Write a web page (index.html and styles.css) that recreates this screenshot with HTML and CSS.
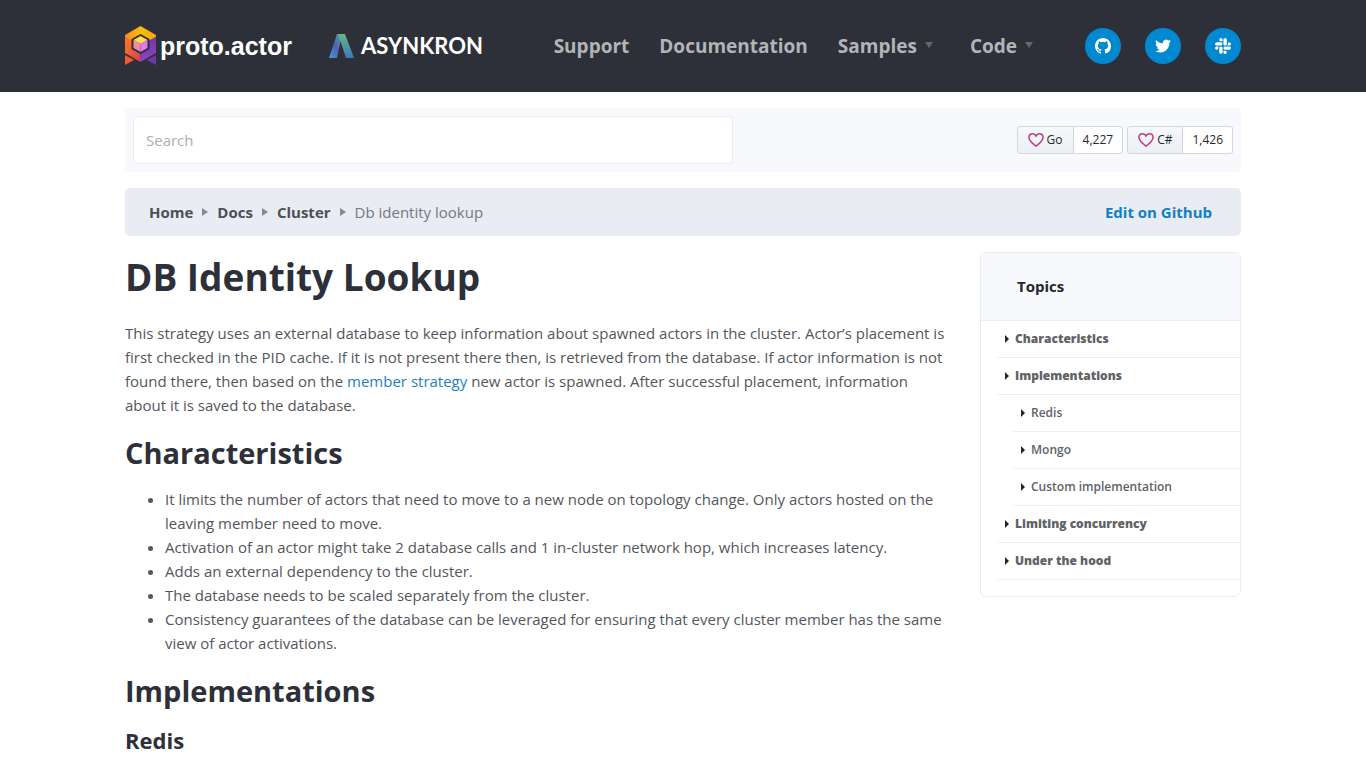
FILE: index.html
```html
<!DOCTYPE html>
<html lang="en">
<head>
<meta charset="utf-8">
<meta name="viewport" content="width=device-width, initial-scale=1">
<title>DB Identity Lookup</title>
<link rel="stylesheet" href="styles.css">
</head>
<body>
<header class="site-header">
  <div class="container header-row">
    <a class="brand" href="#">
      <svg class="brand-mark" viewBox="0 0 31 40" aria-hidden="true">
        <defs>
          <linearGradient id="top" x1="0" x2="1"><stop offset="0" stop-color="#f58a1f"/><stop offset=".5" stop-color="#fdb913"/><stop offset="1" stop-color="#f5a800"/></linearGradient>
          <linearGradient id="left" x1="0" x2="1" y1="0" y2="1"><stop offset="0" stop-color="#fa7a26"/><stop offset="1" stop-color="#d93f55"/></linearGradient>
          <linearGradient id="right" x1="0" x2="0" y1="0" y2="1"><stop offset="0" stop-color="#7037a8"/><stop offset="1" stop-color="#8e45bd"/></linearGradient>
          <linearGradient id="cube" x1="0" x2="1" y1="0" y2="1"><stop offset="0" stop-color="#ff9a5c"/><stop offset="1" stop-color="#e17af0"/></linearGradient>
        </defs>
        <path fill="url(#top)" d="M15.500 0 31 9v2l-7 4-8.500-5L7 15l-7-4V9z"/>
        <path fill="url(#left)" d="m0 11 8 4v8l7.500 5v8L0 27z"/>
        <path fill="url(#right)" d="m31 11-8 4v8l-7.500 5v8L31 27z"/>
        <path fill="#2d3038" d="m15.500 8 9 5v10l-9 5-9-5V13z"/>
        <path fill="#ffe14f" d="m15.500 10 7 4-7 4-7-4z"/>
        <path fill="url(#cube)" d="m8.500 14 7 4v8l-7-4z"/>
        <path fill="#df7af0" d="m22.500 14-7 4v8l7-4z"/>
        <path fill="#f15a29" d="m0 29 9 5-9 5z"/>
        <path fill="#7139a8" d="m31 29-9 5 9 5z"/>
      </svg>
      <span class="brand-name">proto.actor</span>
    </a>
    <a class="sponsor" href="#">
      <svg class="sponsor-mark" viewBox="0 0 25 25" aria-hidden="true">
        <defs>
          <linearGradient id="legl" x1="1" x2="0" y1="0" y2="1"><stop offset="0" stop-color="#4faaa0"/><stop offset=".5" stop-color="#5361b0"/><stop offset="1" stop-color="#429ddd"/></linearGradient>
          <linearGradient id="legr" x1="0" x2="0" y1="0" y2="1"><stop offset="0" stop-color="#62b77c"/><stop offset="1" stop-color="#3e78bd"/></linearGradient>
        </defs>
        <path fill="url(#legl)" d="M8 0h5L8 24H0z"/>
        <path fill="url(#legr)" d="M9 0h7l9 24h-8z"/>
      </svg>
      <span class="sponsor-name">ASYNKRON</span>
    </a>
    <nav class="main-nav" aria-label="Main">
      <a href="#">Support</a>
      <a href="#">Documentation</a>
      <a href="#" class="has-menu">Samples</a>
      <a href="#" class="has-menu">Code</a>
    </nav>
    <div class="social">
      <a href="#" aria-label="GitHub"><svg viewBox="0 0 16 16"><path d="M8 0C3.580 0 0 3.580 0 8c0 3.540 2.290 6.530 5.470 7.590.4.070.55-.17.55-.38 0-.19-.01-.82-.01-1.490-2.010.37-2.530-.49-2.690-.94-.09-.23-.48-.94-.82-1.130-.28-.15-.68-.52-.01-.53.63-.01 1.080.58 1.230.82.72 1.210 1.870.87 2.330.66.070-.52.280-.87.510-1.070-1.780-.2-3.640-.89-3.640-3.950 0-.87.310-1.590.820-2.150-.08-.2-.36-1.020.080-2.120 0 0 .67-.21 2.200.82a7.600 7.600 0 0 1 4 0c1.530-1.040 2.200-.82 2.200-.82.44 1.100.16 1.920.08 2.120.51.560.82 1.270.82 2.150 0 3.070-1.870 3.750-3.650 3.950.29.250.54.730.54 1.480 0 1.070-.01 1.930-.01 2.200 0 .21.15.46.55.380A8.010 8.010 0 0 0 16 8c0-4.420-3.580-8-8-8z"/></svg></a>
      <a href="#" aria-label="Twitter"><svg viewBox="0 0 24 24"><path d="M23.950 4.570a10 10 0 0 1-2.820.77 4.960 4.960 0 0 0 2.160-2.720 9.900 9.900 0 0 1-3.120 1.190 4.920 4.920 0 0 0-8.380 4.480C7.690 8.100 4.070 6.130 1.640 3.160a4.820 4.820 0 0 0-.67 2.480c0 1.710.87 3.210 2.190 4.100a4.900 4.900 0 0 1-2.230-.62v.06a4.920 4.920 0 0 0 3.950 4.830 5 5 0 0 1-2.210.08 4.940 4.940 0 0 0 4.600 3.420A9.870 9.870 0 0 1 0 19.540a13.990 13.990 0 0 0 7.550 2.210c9.050 0 14-7.500 14-13.980 0-.21 0-.42-.02-.63a9.900 9.900 0 0 0 2.420-2.570z"/></svg></a>
      <a href="#" aria-label="Slack"><svg viewBox="0 0 24 24"><path d="M5.042 15.165a2.528 2.528 0 0 1-2.520 2.523A2.528 2.528 0 0 1 0 15.165a2.527 2.527 0 0 1 2.522-2.520h2.520v2.520zm1.271 0a2.527 2.527 0 0 1 2.521-2.520 2.527 2.527 0 0 1 2.521 2.520v6.313A2.528 2.528 0 0 1 8.834 24a2.528 2.528 0 0 1-2.521-2.522v-6.313zM8.834 5.042a2.528 2.528 0 0 1-2.521-2.520A2.528 2.528 0 0 1 8.834 0a2.528 2.528 0 0 1 2.521 2.522v2.520H8.834zm0 1.271a2.528 2.528 0 0 1 2.521 2.521 2.528 2.528 0 0 1-2.521 2.521H2.522A2.528 2.528 0 0 1 0 8.834a2.528 2.528 0 0 1 2.522-2.521h6.312zm10.122 2.521a2.528 2.528 0 0 1 2.522-2.521A2.528 2.528 0 0 1 24 8.834a2.528 2.528 0 0 1-2.522 2.521h-2.522V8.834zm-1.268 0a2.528 2.528 0 0 1-2.523 2.521 2.527 2.527 0 0 1-2.520-2.521V2.522A2.527 2.527 0 0 1 15.165 0a2.528 2.528 0 0 1 2.523 2.522v6.312zm-2.523 10.122a2.528 2.528 0 0 1 2.523 2.522A2.528 2.528 0 0 1 15.165 24a2.527 2.527 0 0 1-2.520-2.522v-2.522h2.520zm0-1.268a2.527 2.527 0 0 1-2.520-2.523 2.526 2.526 0 0 1 2.520-2.520h6.313A2.527 2.527 0 0 1 24 15.165a2.528 2.528 0 0 1-2.522 2.523h-6.313z"/></svg></a>
    </div>
  </div>
</header>

<div class="container page">
  <div class="toolbar">
    <input class="search" type="search" placeholder="Search" aria-label="Search">
    <div class="stars">
      <div class="star">
        <a class="star-button" href="#"><svg viewBox="0 0 16 16" aria-hidden="true"><path d="M8 14.200C3 10.500.9 8.200.9 5.300A3.800 3.800 0 0 1 4.700 1.700C6.200 1.700 7.400 2.600 8 3.900c.6-1.300 1.800-2.200 3.300-2.200a3.800 3.800 0 0 1 3.800 3.600c0 2.900-2.100 5.200-7.100 8.900z"/></svg>Go</a><a class="star-count" href="#">4,227</a>
      </div>
      <div class="star">
        <a class="star-button" href="#"><svg viewBox="0 0 16 16" aria-hidden="true"><path d="M8 14.200C3 10.500.9 8.200.9 5.300A3.800 3.800 0 0 1 4.700 1.700C6.200 1.700 7.400 2.600 8 3.900c.6-1.300 1.800-2.200 3.300-2.200a3.800 3.800 0 0 1 3.800 3.600c0 2.900-2.100 5.200-7.100 8.900z"/></svg>C#</a><a class="star-count" href="#">1,426</a>
      </div>
    </div>
  </div>

  <div class="crumb-bar">
    <nav aria-label="Breadcrumb">
      <ol class="crumbs">
        <li><a href="#">Home</a></li>
        <li><a href="#">Docs</a></li>
        <li><a href="#">Cluster</a></li>
        <li aria-current="page">Db identity lookup</li>
      </ol>
    </nav>
    <a class="edit-link" href="#">Edit on Github</a>
  </div>

  <div class="columns">
    <main class="article">
      <h1>DB Identity Lookup</h1>
      <p>This strategy uses an external database to keep information about spawned actors in the cluster. Actor’s placement is first checked in the PID cache. If it is not present there then, is retrieved from the database. If actor information is not found there, then based on the <a href="#">member strategy</a> new actor is spawned. After successful placement, information about it is saved to the database.</p>
      <h2>Characteristics</h2>
      <ul>
        <li>It limits the number of actors that need to move to a new node on topology change. Only actors hosted on the leaving member need to move.</li>
        <li>Activation of an actor might take 2 database calls and 1 in-cluster network hop, which increases latency.</li>
        <li>Adds an external dependency to the cluster.</li>
        <li>The database needs to be scaled separately from the cluster.</li>
        <li>Consistency guarantees of the database can be leveraged for ensuring that every cluster member has the same view of actor activations.</li>
      </ul>
      <h2>Implementations</h2>
      <h3>Redis</h3>
    </main>
    <aside class="topics">
      <h4>Topics</h4>
      <ul>
        <li><a href="#">Characteristics</a></li>
        <li><a href="#">Implementations</a>
          <ul>
            <li><a href="#">Redis</a></li>
            <li><a href="#">Mongo</a></li>
            <li><a href="#">Custom implementation</a></li>
          </ul>
        </li>
        <li><a href="#">Limiting concurrency</a></li>
        <li><a href="#">Under the hood</a></li>
      </ul>
    </aside>
  </div>
</div>
</body>
</html>
```
FILE: styles.css
```css
* { box-sizing: border-box; }

body {
  margin: 0;
  background: #fff;
  color: #54565b;
  font: 15px/24px "Open Sans", "Noto Sans", sans-serif;
}

a { color: inherit; text-decoration: none; }

.container {
  max-width: 1148px;
  margin: 0 auto;
  padding: 0 16px;
}

/* Header */
.site-header { background: #2d3038; color: #fff; }

.header-row {
  display: flex;
  align-items: center;
  min-height: 92px;
}

.brand, .sponsor { display: flex; align-items: center; }
.brand { gap: 4px; margin-right: 37px; }
.brand-mark { width: 31px; height: 40px; }
.brand-name { font: bold 25px/36px "Liberation Sans", Arial, sans-serif; }
.sponsor { gap: 7px; }
.sponsor-mark { width: 25px; height: 25px; }
.sponsor-name { font: bold 22px/32px Lato, sans-serif; }

.main-nav {
  display: flex;
  gap: 30px;
  margin-left: auto;
  color: #b3b4b9;
  font-size: 19px;
  font-weight: 700;
}

.has-menu { display: flex; align-items: center; }
.has-menu::after {
  content: "";
  margin: 0 7px 2px 8px;
  border: 4px solid transparent;
  border-top: 6px solid #65686e;
  border-bottom: 0;
}

.social { display: flex; gap: 24px; margin-left: 45px; }
.social a {
  display: grid;
  place-items: center;
  width: 36px;
  height: 36px;
  border-radius: 50%;
  background: #0088d1;
}
.social svg { width: 16px; height: 16px; fill: #fff; }

/* Search and repository counters */
.page { padding-top: 16px; }

.toolbar {
  display: flex;
  justify-content: space-between;
  align-items: center;
  padding: 8px;
  background: #f8f9fd;
}

.search {
  flex: 0 1 600px;
  min-width: 0;
  height: 48px;
  padding: 0 12px;
  border: 1px solid #e9ecf1;
  border-radius: 4px;
  background: #fff;
  color: inherit;
  font: inherit;
}
.search::placeholder { color: #acaeb1; opacity: 1; }

.stars { display: flex; gap: 4px; }
.star { display: flex; color: #24292e; font-size: 12px; line-height: 26px; }
.star-button, .star-count { border: 1px solid #d3d6da; }
.star-button {
  display: flex;
  align-items: center;
  gap: 3px;
  padding: 0 10px;
  border-radius: 3px 0 0 3px;
  background: linear-gradient(#f6f8fa, #ebf0f4);
}
.star-button svg { width: 16px; height: 16px; fill: none; stroke: #bf3989; stroke-width: 1.5; }
.star-count {
  padding: 0 9px;
  border-left: 0;
  border-radius: 0 3px 3px 0;
  background: #fff;
}

/* Breadcrumb */
.crumb-bar {
  display: flex;
  justify-content: space-between;
  margin: 16px 0;
  padding: 12px 29px 12px 24px;
  border-radius: 5px;
  background: #e9ecf2;
}
.crumbs {
  display: flex;
  margin: 0;
  padding: 0;
  list-style: none;
  color: #767980;
}
.crumbs li { display: flex; align-items: center; }
.crumbs a { color: #4d4f55; font-weight: 700; }
.crumbs li + li::before {
  content: "";
  margin: 0 9px;
  border: 4px solid transparent;
  border-left: 6px solid #86898f;
  border-right: 0;
}
.edit-link { color: #0e80c8; font-weight: 700; }

/* Article and topics */
.columns { display: flex; align-items: flex-start; gap: 28px; }

.article { flex: 1; min-width: 0; }
.article h1, .article h2, .article h3 { color: #2d3038; font-weight: 700; }
.article h1 { margin: 0 0 20px; font-size: 37px; line-height: 49px; }
.article p { margin: 0 0 16px; }
.article p a { color: #1c7fc0; }
.article h2 { margin: 0 0 14px; font-size: 29px; line-height: 40px; }
.article h3 { margin: 0 0 16px; font-size: 22px; line-height: 30px; }
.article ul { margin: 0 0 16px; padding-left: 40px; }

.topics {
  flex: 0 0 261px;
  padding-bottom: 16px;
  border: 1px solid #e9ecf0;
  border-radius: 6px;
  font-size: 12px;
  line-height: 36px;
}
.topics h4 {
  margin: 0;
  padding: 0 36px;
  border-bottom: 1px solid #e9ecf0;
  border-radius: 5px 5px 0 0;
  background: #f8f9fd;
  color: #25272e;
  font-size: 15px;
  line-height: 67px;
}
.topics ul { margin: 0; padding: 0 0 0 16px; list-style: none; }
.topics a {
  display: flex;
  align-items: center;
  padding-left: 8px;
  border-bottom: 1px solid #efeee9;
  color: #606266;
  font-weight: 800;
}
.topics a::before {
  content: "";
  margin-right: 6px;
  border: 4px solid transparent;
  border-left: 4px solid #24262b;
  border-right: 0;
}
.topics ul ul a { font-weight: 600; }
```
